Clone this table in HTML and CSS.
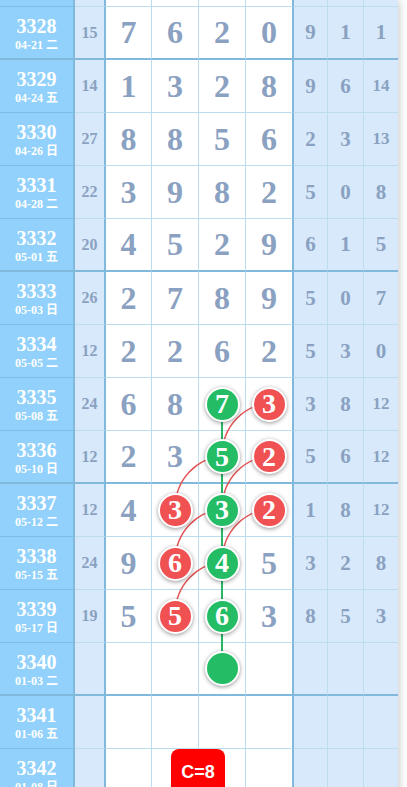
FILE: index.html
```html
<!DOCTYPE html>
<html lang="zh">
<head>
    <meta charset="UTF-8">
    <meta name="viewport" content="width=device-width, initial-scale=1.0">
    <title>走势图</title>
    <link rel="stylesheet" href="styles.css">
</head>
<body>
    <div class="board">
        <div class="row stub">
            <div class="cell issue"></div><div class="cell sum"></div>
            <div class="cell"></div><div class="cell"></div><div class="cell"></div><div class="cell gap"></div>
            <div class="cell side"></div><div class="cell side"></div><div class="cell side last"></div>
        </div>

        <div class="row sep">
            <div class="cell issue"><b>3328</b><small>04-21 二</small></div><div class="cell sum">15</div>
            <div class="cell num">7</div><div class="cell num">6</div><div class="cell num">2</div><div class="cell num gap">0</div>
            <div class="cell side">9</div><div class="cell side">1</div><div class="cell side last">1</div>
        </div>
        <div class="row">
            <div class="cell issue"><b>3329</b><small>04-24 五</small></div><div class="cell sum">14</div>
            <div class="cell num">1</div><div class="cell num">3</div><div class="cell num">2</div><div class="cell num gap">8</div>
            <div class="cell side">9</div><div class="cell side">6</div><div class="cell side last two">14</div>
        </div>
        <div class="row">
            <div class="cell issue"><b>3330</b><small>04-26 日</small></div><div class="cell sum">27</div>
            <div class="cell num">8</div><div class="cell num">8</div><div class="cell num">5</div><div class="cell num gap">6</div>
            <div class="cell side">2</div><div class="cell side">3</div><div class="cell side last two">13</div>
        </div>
        <div class="row">
            <div class="cell issue"><b>3331</b><small>04-28 二</small></div><div class="cell sum">22</div>
            <div class="cell num">3</div><div class="cell num">9</div><div class="cell num">8</div><div class="cell num gap">2</div>
            <div class="cell side">5</div><div class="cell side">0</div><div class="cell side last">8</div>
        </div>
        <div class="row sep">
            <div class="cell issue"><b>3332</b><small>05-01 五</small></div><div class="cell sum">20</div>
            <div class="cell num">4</div><div class="cell num">5</div><div class="cell num">2</div><div class="cell num gap">9</div>
            <div class="cell side">6</div><div class="cell side">1</div><div class="cell side last">5</div>
        </div>

        <div class="row">
            <div class="cell issue"><b>3333</b><small>05-03 日</small></div><div class="cell sum">26</div>
            <div class="cell num">2</div><div class="cell num">7</div><div class="cell num">8</div><div class="cell num gap">9</div>
            <div class="cell side">5</div><div class="cell side">0</div><div class="cell side last">7</div>
        </div>
        <div class="row">
            <div class="cell issue"><b>3334</b><small>05-05 二</small></div><div class="cell sum">12</div>
            <div class="cell num">2</div><div class="cell num">2</div><div class="cell num">6</div><div class="cell num gap">2</div>
            <div class="cell side">5</div><div class="cell side">3</div><div class="cell side last">0</div>
        </div>
        <div class="row">
            <div class="cell issue"><b>3335</b><small>05-08 五</small></div><div class="cell sum">24</div>
            <div class="cell num">6</div><div class="cell num">8</div>
            <div class="cell"><span class="ball green">7</span></div>
            <div class="cell gap"><span class="ball red">3</span></div>
            <div class="cell side">3</div><div class="cell side">8</div><div class="cell side last two">12</div>
        </div>
        <div class="row sep">
            <div class="cell issue"><b>3336</b><small>05-10 日</small></div><div class="cell sum">12</div>
            <div class="cell num">2</div><div class="cell num">3</div>
            <div class="cell"><span class="ball green">5</span></div>
            <div class="cell gap"><span class="ball red">2</span></div>
            <div class="cell side">5</div><div class="cell side">6</div><div class="cell side last two">12</div>
        </div>

        <div class="row">
            <div class="cell issue"><b>3337</b><small>05-12 二</small></div><div class="cell sum">12</div>
            <div class="cell num">4</div>
            <div class="cell"><span class="ball red">3</span></div>
            <div class="cell"><span class="ball green">3</span></div>
            <div class="cell gap"><span class="ball red">2</span></div>
            <div class="cell side">1</div><div class="cell side">8</div><div class="cell side last two">12</div>
        </div>
        <div class="row">
            <div class="cell issue"><b>3338</b><small>05-15 五</small></div><div class="cell sum">24</div>
            <div class="cell num">9</div>
            <div class="cell"><span class="ball red">6</span></div>
            <div class="cell"><span class="ball green">4</span></div>
            <div class="cell num gap">5</div>
            <div class="cell side">3</div><div class="cell side">2</div><div class="cell side last">8</div>
        </div>
        <div class="row">
            <div class="cell issue"><b>3339</b><small>05-17 日</small></div><div class="cell sum">19</div>
            <div class="cell num">5</div>
            <div class="cell"><span class="ball red">5</span></div>
            <div class="cell"><span class="ball green">6</span></div>
            <div class="cell num gap">3</div>
            <div class="cell side">8</div><div class="cell side">5</div><div class="cell side last">3</div>
        </div>
        <div class="row sep">
            <div class="cell issue"><b>3340</b><small>01-03 二</small></div><div class="cell sum"></div>
            <div class="cell"></div>
            <div class="cell"></div>
            <div class="cell"><span class="ball green"></span></div>
            <div class="cell gap"></div>
            <div class="cell side"></div><div class="cell side"></div><div class="cell side last"></div>
        </div>

        <div class="row">
            <div class="cell issue"><b>3341</b><small>01-06 五</small></div><div class="cell sum"></div>
            <div class="cell"></div><div class="cell"></div><div class="cell"></div><div class="cell gap"></div>
            <div class="cell side"></div><div class="cell side"></div><div class="cell side last"></div>
        </div>
        <div class="row">
            <div class="cell issue"><b>3342</b><small>01-08 日</small></div><div class="cell sum"></div>
            <div class="cell"></div><div class="cell"></div><div class="cell"></div><div class="cell gap"></div>
            <div class="cell side"></div><div class="cell side"></div><div class="cell side last"></div>
        </div>

        <!-- connecting lines, drawn under the balls -->
        <svg class="links" width="398" height="802" viewBox="0 0 398 802">
            <line x1="222" y1="403" x2="222" y2="668" stroke="#27b866" stroke-width="2"/>
            <g fill="none" stroke="#e45456" stroke-width="1.5">
                <path d="M269 403.5 C245 405 222 425 222 456.5"/>
                <path d="M269 456.5 C245 458 222 478 222 509.5"/>
                <path d="M222 456.5 C198 458 175 478 175 509.5"/>
                <path d="M269 509.5 C245 511 222 531 222 562.5"/>
                <path d="M222 509.5 C198 511 175 531 175 562.5"/>
                <path d="M222 562.5 C198 564 175 584 175 615.5"/>
            </g>
        </svg>

        <div class="badge">C=8</div>
    </div>
</body>
</html>
```

FILE: styles.css
```css
body {
    margin: 0;
    background-color: #ffffff;
    font-family: 'Liberation Serif', 'Noto Sans CJK SC', serif;
    overflow: hidden;
}

.board {
    position: relative;
    width: 398px;
    box-shadow: 0 0 9px rgba(0, 0, 0, 0.28);
}

.row {
    display: grid;
    grid-template-columns: 75px 31px 46px 47px 47px 48px 34px 36px 34px;
    height: 53px;
}

.row.stub {
    height: 7px;
}

.cell {
    box-sizing: border-box;
    display: flex;
    align-items: center;
    justify-content: center;
    border-right: 1px solid #bcdcef;
    border-bottom: 1px solid #bcdcef;
    background-color: #ffffff;
    color: #8aa1c1;
    font-weight: bold;
}

.row.sep .cell {
    border-bottom: 2px solid #80b9db;
}

.cell.issue {
    flex-direction: column;
    background-color: #91d1fb;
    border-right: 2px solid #7fb9dc;
    border-bottom-color: #7cbde6;
    color: #ffffff;
    padding-top: 2px;
}

.cell.issue b {
    font-size: 20px;
    line-height: 22px;
}

.cell.issue small {
    font-size: 12px;
    line-height: 16px;
}

.cell.sum {
    background-color: #d7e9fa;
    border-right: 2px solid #80b9db;
    font-size: 16px;
}

.cell.num {
    font-size: 32px;
}

.cell.gap {
    border-right: 2px solid #80b9db;
}

.cell.side {
    background-color: #d7e9fa;
    font-size: 21px;
}

.cell.side.two {
    font-size: 17px;
}

.cell.last {
    border-right: none;
}

.ball {
    position: relative;
    z-index: 2;
    box-sizing: border-box;
    width: 35px;
    height: 35px;
    border-radius: 50%;
    border: 2px solid #ffffff;
    box-shadow: 0 1px 4px rgba(0, 0, 0, 0.4);
    display: flex;
    align-items: center;
    justify-content: center;
    color: #ffffff;
    font-size: 28px;
    line-height: 1;
}

.ball.green {
    background-color: #24bd65;
}

.ball.red {
    background-color: #f05152;
}

.links {
    position: absolute;
    top: 0;
    left: 0;
    z-index: 1;
    pointer-events: none;
}

.badge {
    position: absolute;
    z-index: 3;
    left: 171px;
    top: 749px;
    width: 54px;
    height: 52px;
    border-radius: 8px;
    background-color: #ff0000;
    color: #ffffff;
    font-family: 'Liberation Sans', Arial, sans-serif;
    font-weight: bold;
    font-size: 18px;
    text-align: center;
    line-height: 47px;
}
```
